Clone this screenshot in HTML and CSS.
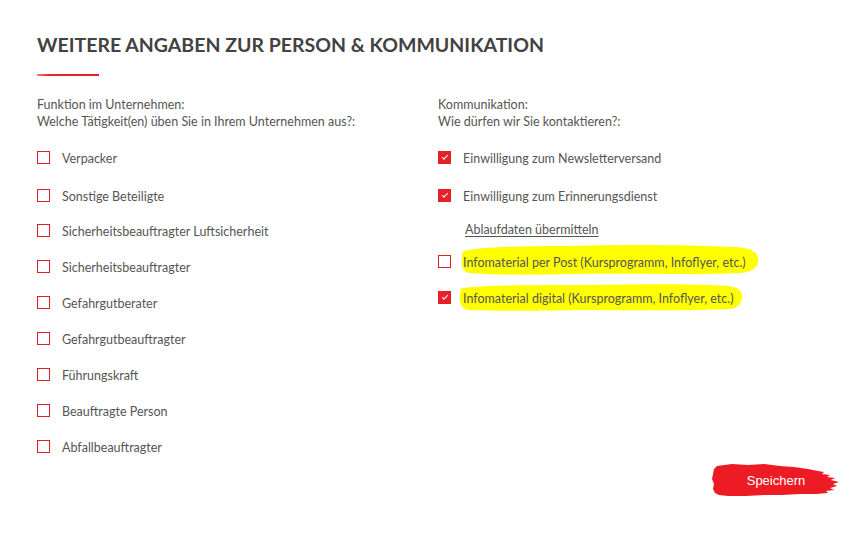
FILE: index.html
```html
<!DOCTYPE html>
<html lang="de">
<head>
<meta charset="utf-8">
<title>Weitere Angaben</title>
<link rel="stylesheet" href="styles.css">
</head>
<body>
<main class="page">
  <h2 class="title">WEITERE ANGABEN ZUR PERSON &amp; KOMMUNIKATION</h2>
  <div class="rule"></div>
  <div class="cols">
    <section class="col">
      <p class="intro">Funktion im Unternehmen:<br>Welche Tätigkeit(en) üben Sie in Ihrem Unternehmen aus?:</p>
      <ul class="opts">
        <li class="opt"><span class="box"></span><span class="lbl">Verpacker</span></li>
        <li class="opt"><span class="box"></span><span class="lbl">Sonstige Beteiligte</span></li>
        <li class="opt"><span class="box"></span><span class="lbl">Sicherheitsbeauftragter Luftsicherheit</span></li>
        <li class="opt"><span class="box"></span><span class="lbl">Sicherheitsbeauftragter</span></li>
        <li class="opt"><span class="box"></span><span class="lbl">Gefahrgutberater</span></li>
        <li class="opt"><span class="box"></span><span class="lbl">Gefahrgutbeauftragter</span></li>
        <li class="opt"><span class="box"></span><span class="lbl">Führungskraft</span></li>
        <li class="opt"><span class="box"></span><span class="lbl">Beauftragte Person</span></li>
        <li class="opt"><span class="box"></span><span class="lbl">Abfallbeauftragter</span></li>
      </ul>
    </section>
    <section class="col">
      <p class="intro">Kommunikation:<br>Wie dürfen wir Sie kontaktieren?:</p>
      <ul class="opts">
        <li class="opt"><span class="box checked"></span><span class="lbl">Einwilligung zum Newsletterversand</span></li>
        <li class="opt"><span class="box checked"></span><span class="lbl">Einwilligung zum Erinnerungsdienst</span></li>
        <li class="opt link-row"><a class="link" href="#">Ablaufdaten übermitteln</a></li>
        <li class="opt"><span class="box"></span><span class="lbl hl">
          <svg class="mark" width="300" height="34" viewBox="0 0 300 34" aria-hidden="true"><path d="M3 9 C20 5 60 4 110 4 C170 2 230 3 275 5 C288 6 296 9 297 16 C298 24 294 29 280 31 C230 33 170 31 110 32 C70 33 30 33 8 31 C2 29 0 25 1 18 C1 13 1 10 3 9 Z" fill="#ffff00"/></svg>
          <span class="txt">Infomaterial per Post (Kursprogramm, Infoflyer, etc.)</span></span></li>
        <li class="opt"><span class="box checked"></span><span class="lbl hl">
          <svg class="mark mark2" width="284" height="30" viewBox="0 0 284 30" aria-hidden="true"><path d="M4 6 C30 3 80 3 130 3 C190 2 240 2 268 4 C279 5 283 9 283 14 C283 21 280 26 270 27 C230 29 170 28 120 28 C70 29 30 29 10 28 C3 27 1 23 1 16 C1 10 1 7 4 6 Z" fill="#ffff00"/></svg>
          <span class="txt">Infomaterial digital (Kursprogramm, Infoflyer, etc.)</span></span></li>
      </ul>
    </section>
  </div>
  <div class="actions">
    <button class="save" type="button">
      <svg class="brush" width="128" height="34" viewBox="0 0 128 34" aria-hidden="true"><path d="M5 3 L20 1 L36 2 L52 1 L68 3 L82 4 L96 6 L106 8 L112 9 L110 11 L118 12 L115 14 L123 15 L119 17 L127 19 L121 21 L125 23 L118 25 L122 27 L114 28 L116 30 L104 31 L88 31 L70 32 L52 32 L34 33 L16 33 L7 32 L3 30 L1 26 L2 21 L0 16 L1 11 L2 6 Z" fill="#ed1c24"/></svg>
      <span class="save-txt">Speichern</span>
    </button>
  </div>
</main>
</body>
</html>
```
FILE: styles.css
```css
* { box-sizing: border-box; }
html, body { margin: 0; padding: 0; background: #fff; }
body {
  font-family: Lato, "Open Sans", sans-serif;
  color: #555;
  font-size: 12.5px;
}
.page {
  width: 867px;
  height: 545px;
  padding: 32px 0 0 37px;
}
.title {
  margin: 0;
  font-size: 19.5px;
  line-height: 25px;
  font-weight: 700;
  color: #424242;
}
.rule {
  width: 62px;
  height: 2px;
  margin-top: 17px;
  background: linear-gradient(90deg, #f27a7e 0%, #e8262c 20%, #e31e24 100%);
}
.cols {
  display: grid;
  grid-template-columns: 401px 1fr;
  margin-top: 20px;
}
.intro {
  margin: 0;
  line-height: 17px;
}
.opts {
  list-style: none;
  margin: 8px 0 0;
  padding: 0;
}
.opt {
  display: flex;
  align-items: center;
  height: 36px;
  line-height: 36px;
}
.opt:first-child { height: 41px; }
.opt:nth-child(2) { height: 35px; }
.box {
  flex: none;
  width: 13px;
  height: 13px;
  border: 1px solid #e31e24;
  margin-right: 12px;
  margin-bottom: 3px;
  position: relative;
}
.box.checked { background: #e8202a; }
.box.checked::after {
  content: "";
  position: absolute;
  left: 3px;
  top: 3px;
  width: 5px;
  height: 2px;
  border-left: 1px solid #fff;
  border-bottom: 1px solid #fff;
  transform: rotate(-45deg);
}
.opt.link-row { padding-left: 27px; height: 31px; }
.link {
  color: #555;
  text-decoration: underline;
  text-underline-offset: 2px;
}
.hl { position: relative; }
.hl .txt { position: relative; }
.mark {
  position: absolute;
  left: -2px;
  top: -3px;
}
.mark2 { left: -4px; top: 1px; }
.actions {
  display: flex;
  justify-content: flex-end;
  padding-right: 27px;
  margin-top: -3px;
}
.save {
  position: relative;
  width: 128px;
  height: 34px;
  padding: 0;
  border: 0;
  background: transparent;
  cursor: pointer;
}
.brush {
  position: absolute;
  left: 0;
  top: 0;
}
.save-txt {
  position: relative;
  font-family: "Liberation Sans", Arial, sans-serif;
  font-size: 13px;
  color: #fff;
}
```
